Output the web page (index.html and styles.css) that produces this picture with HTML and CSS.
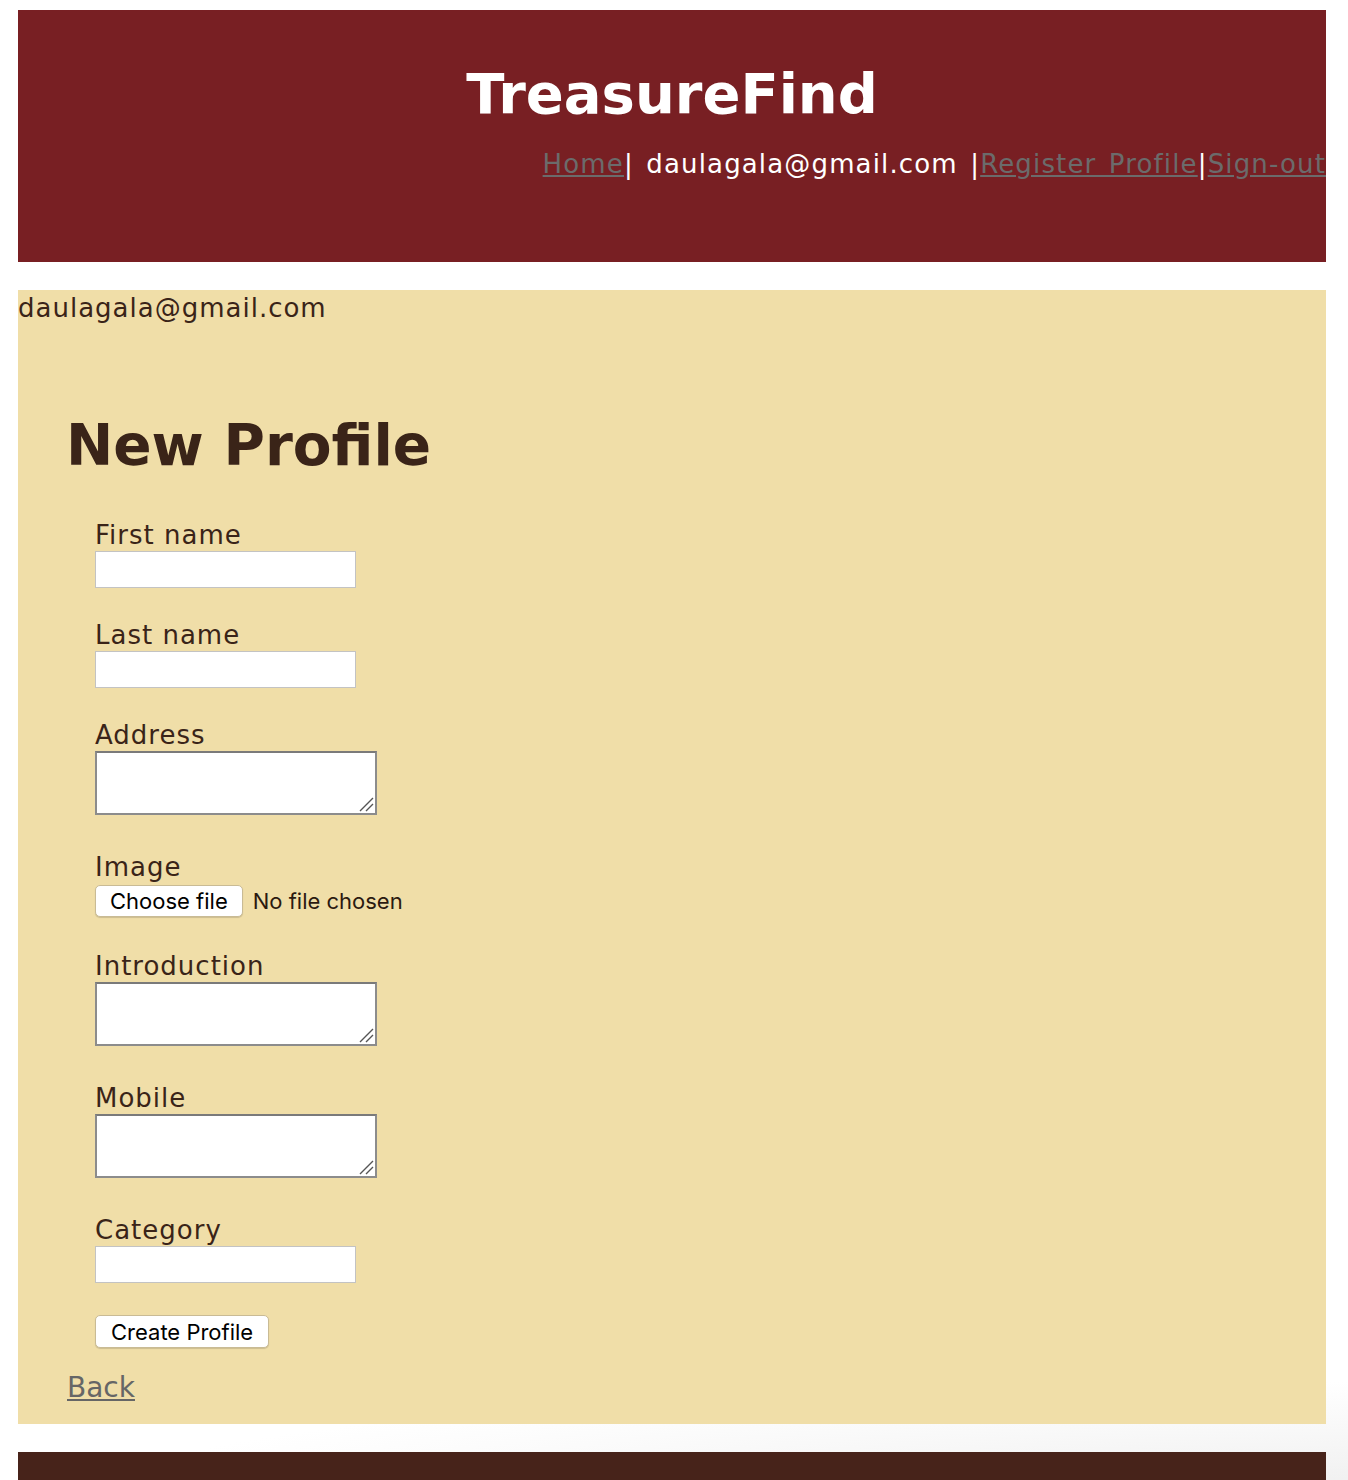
FILE: index.html
```html
<!DOCTYPE html>
<html>
<head>
<meta charset="utf-8">
<title>TreasureFind</title>
<link rel="stylesheet" href="styles.css">
</head>
<body>
<div class="page">
  <header class="site-header">
    <h1 class="brand">TreasureFind</h1>
    <nav class="nav"><a href="#">Home</a>| daulagala@gmail.com |<a href="#">Register Profile</a>|<a href="#">Sign-out</a></nav>
  </header>
  <main class="content">
    <div class="user">daulagala@gmail.com</div>
    <h2 class="title">New Profile</h2>
    <form class="form">
      <div class="field field-input">
        <label class="label">First name</label>
        <input class="text" type="text">
      </div>
      <div class="field field-input">
        <label class="label">Last name</label>
        <input class="text" type="text">
      </div>
      <div class="field field-area">
        <label class="label">Address</label>
        <div class="area-wrap"><textarea class="area"></textarea><svg class="grip" width="16" height="16" viewBox="0 0 16 16"><path d="M2 15 L15 2 M8 15 L15 8" stroke="#555" stroke-width="1.4" fill="none"/></svg></div>
      </div>
      <div class="field field-file">
        <label class="label">Image</label>
        <div class="file"><button type="button" class="btn">Choose file</button><span class="file-note">No file chosen</span></div>
      </div>
      <div class="field field-area">
        <label class="label">Introduction</label>
        <div class="area-wrap"><textarea class="area"></textarea><svg class="grip" width="16" height="16" viewBox="0 0 16 16"><path d="M2 15 L15 2 M8 15 L15 8" stroke="#555" stroke-width="1.4" fill="none"/></svg></div>
      </div>
      <div class="field field-area">
        <label class="label">Mobile</label>
        <div class="area-wrap"><textarea class="area"></textarea><svg class="grip" width="16" height="16" viewBox="0 0 16 16"><path d="M2 15 L15 2 M8 15 L15 8" stroke="#555" stroke-width="1.4" fill="none"/></svg></div>
      </div>
      <div class="field field-input">
        <label class="label">Category</label>
        <input class="text" type="text">
      </div>
      <div class="actions"><button type="button" class="btn btn-submit">Create Profile</button></div>
    </form>
    <a class="back" href="#">Back</a>
  </main>
  <footer class="site-footer"></footer>
</div>
</body>
</html>
```
FILE: styles.css
```css
* { box-sizing: border-box; }
html { background: #fff; }
body {
  margin: 0;
  min-height: 1480px;
  background: radial-gradient(ellipse 1250px 110px at 100% 100%, #efefef 0%, #ffffff 100%);
  font-family: "DejaVu Sans", Verdana, sans-serif;
  color: #3a2418;
}
.page {
  padding: 10px 22px 0 18px;
}
.site-header {
  background: #781f23;
  height: 252px;
  padding-top: 51px;
}
.brand {
  margin: 0;
  text-align: center;
  color: #fff;
  font-size: 56px;
  line-height: 66px;
  font-weight: bold;
}
.nav {
  margin-top: 22px;
  text-align: right;
  color: #fff;
  font-size: 26px;
  line-height: 30px;
  letter-spacing: 1.15px;
  word-spacing: 3px;
  white-space: nowrap;
}
.nav a { color: #6b6b6b; }
.content {
  margin-top: 28px;
  background: #f0dea8;
  padding-top: 3px;
  padding-bottom: 21px;
  font-size: 26px;
  line-height: 30px;
  letter-spacing: 1px;
}
.user { color: #3a2418; }
.title {
  margin: 90px 0 0 48px;
  font-size: 56.5px;
  line-height: 66px;
  font-weight: bold;
  letter-spacing: 0;
  color: #3a2418;
}
.form {
  margin: 41px 0 0 77px;
}
.field {
  display: flex;
  flex-direction: column;
  align-items: flex-start;
}
.label {
  display: block;
  height: 30px;
  line-height: 30px;
}
.field-input { height: 100px; }
.field-area { height: 132px; }
.field-file { height: 99px; }
.text {
  margin-top: 1px;
  width: 261px;
  height: 37px;
  border: 1px solid #c3c3c3;
  background: #fff;
  padding: 0;
}
.area-wrap {
  position: relative;
  margin-top: 1px;
  width: 282px;
  height: 64px;
}
.area {
  display: block;
  width: 282px;
  height: 64px;
  border: 2px solid #8c8c8c;
  border-top-color: #7a7a7a;
  background: #fff;
  padding: 0;
  resize: none;
}
.grip {
  position: absolute;
  right: 3px;
  bottom: 3px;
}
.file {
  margin-top: 3px;
  display: flex;
  align-items: center;
}
.btn {
  font-family: Inter, "Liberation Sans", sans-serif;
  font-size: 22px;
  letter-spacing: 0;
  color: #000;
  background: #fff;
  border: 1px solid #c9bb95;
  border-radius: 5px;
  box-shadow: 0 1px 1px rgba(0,0,0,0.15);
  height: 32px;
  padding: 0 14px;
  line-height: 30px;
}
.file-note {
  margin-left: 10px;
  font-family: Inter, "Liberation Sans", sans-serif;
  font-size: 22px;
  letter-spacing: 0;
  color: #2b1a10;
}
.actions {
  height: 58px;
}
.btn-submit { height: 33px; padding: 0 15px; }
.back {
  display: inline-block;
  margin-left: 49px;
  color: #666;
  font-size: 28px;
  line-height: 30px;
  letter-spacing: 0;
}
.site-footer {
  margin-top: 28px;
  height: 40px;
  background: #47231a;
}
```
